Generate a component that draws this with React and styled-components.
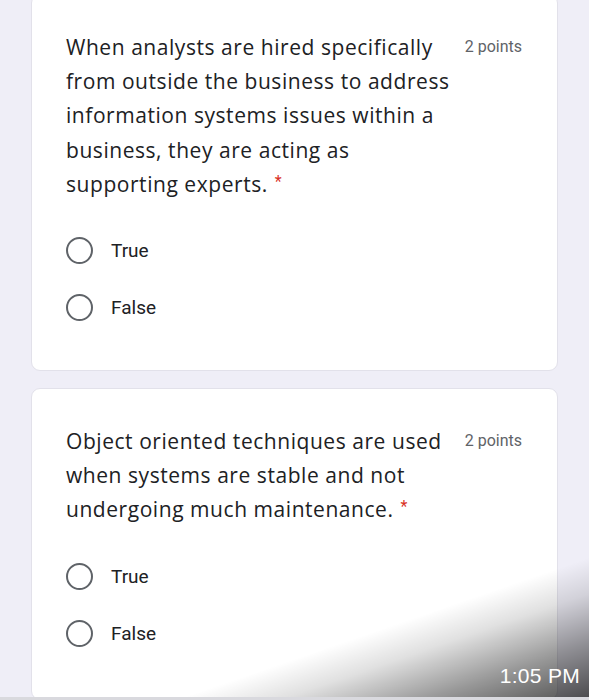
import React from "react";
import styled, { createGlobalStyle } from "styled-components";

const Global = createGlobalStyle`
  html, body { margin: 0; padding: 0; }
  body {
    background: #efeef7;
    font-family: Roboto, "Noto Sans", Arial, sans-serif;
    -webkit-font-smoothing: antialiased;
  }
`;

const Screen = styled.div`
  position: relative;
  width: 589px;
  height: 700px;
  overflow: hidden;
  background: #efeef7;
  border-bottom: 3px solid #d9d9de;
  box-sizing: border-box;
`;

const Column = styled.div`
  display: flex;
  flex-direction: column;
  gap: 17px;
  padding: 0 31px 0 31px;
  margin-top: -6px;
`;

const Card = styled.section`
  background: #ffffff;
  border: 1px solid #e2e1ea;
  border-radius: 9px;
  padding: ${(p) => p.$top}px 35px 0 34px;
  box-sizing: border-box;
  height: ${(p) => p.$height}px;
`;

const Header = styled.div`
  display: flex;
  justify-content: space-between;
  align-items: flex-start;
`;

const Title = styled.div`
  font-family: "Open Sans", Roboto, sans-serif;
  font-size: 21px;
  line-height: 34.2px;
  color: #202124;
  letter-spacing: 0.55px;
`;

const Line = styled.div`
  white-space: nowrap;
`;

const Star = styled.span`
  position: relative;
  top: -5px;
  color: #d93025;
  font-family: Roboto, sans-serif;
  font-size: 16px;
  line-height: 0;
  margin-left: 7px;
`;

const Points = styled.div`
  font-size: 16px;
  line-height: 34px;
  color: #5f6368;
  white-space: nowrap;
`;

const Options = styled.div`
  display: flex;
  flex-direction: column;
  gap: 30px;
  margin-top: ${(p) => p.$gap}px;
`;

const Option = styled.label`
  display: flex;
  align-items: center;
  gap: 18px;
  height: 27px;
  font-size: 19px;
  color: #202124;
`;

const Radio = styled.span`
  width: 27px;
  height: 27px;
  border: 2.6px solid #5f6368;
  border-radius: 50%;
  box-sizing: border-box;
  flex: none;
`;

const Shade = styled.div`
  position: absolute;
  inset: 0;
  pointer-events: none;
  background: linear-gradient(
    161deg,
    rgba(0, 0, 0, 0) 84.5%,
    rgba(0, 0, 0, 0.12) 88.5%,
    rgba(0, 0, 0, 0.4) 94%,
    rgba(0, 0, 0, 0.68) 100%
  );
`;

const Clock = styled.div`
  position: absolute;
  right: 9px;
  bottom: 9px;
  font-family: "Liberation Sans", Arial, sans-serif;
  font-size: 21px;
  color: #ffffff;
  letter-spacing: 0.3px;
`;

const questions = [
  {
    lines: [
      "When analysts are hired specifically",
      "from outside the business to address",
      "information systems issues within a",
      "business, they are acting as",
      "supporting experts.",
    ],
    top: 35,
    height: 377,
    gap: 36,
  },
  {
    lines: [
      "Object oriented techniques are used",
      "when systems are stable and not",
      "undergoing much maintenance.",
    ],
    top: 35,
    height: 312,
    gap: 36,
  },
];

export default function App() {
  return (
    <>
      <Global />
      <Screen>
        <Column>
          {questions.map((q, i) => (
            <Card key={i} $top={q.top} $height={q.height}>
              <Header>
                <Title>
                  {q.lines.map((l, j) => (
                    <Line key={j}>
                      {l}
                      {j === q.lines.length - 1 && <Star>*</Star>}
                    </Line>
                  ))}
                </Title>
                <Points>2 points</Points>
              </Header>
              <Options $gap={q.gap}>
                <Option>
                  <Radio />
                  True
                </Option>
                <Option>
                  <Radio />
                  False
                </Option>
              </Options>
            </Card>
          ))}
        </Column>
        <Shade />
        <Clock>1:05 PM</Clock>
      </Screen>
    </>
  );
}
